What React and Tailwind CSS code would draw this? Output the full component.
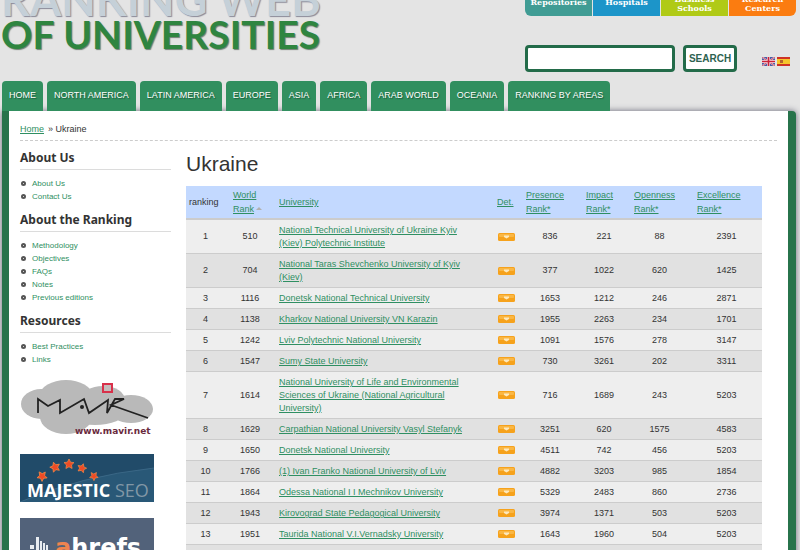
import React from 'react';

const navItems = [
    'HOME', 'NORTH AMERICA', 'LATIN AMERICA', 'EUROPE', 'ASIA',
    'AFRICA', 'ARAB WORLD', 'OCEANIA', 'RANKING BY AREAS',
];

const siteTabs = [
    { lines: ['Repositories'], style: 'justify-center bg-[#409c94] rounded-bl-md' },
    { lines: ['Hospitals'], style: 'justify-center bg-[#1c95c9]' },
    { lines: ['Business', 'Schools'], style: 'justify-end bg-[#b0ca16]' },
    { lines: ['Research', 'Centers'], style: 'justify-end bg-[#fb7c10] rounded-br-md' },
];

const menus = [
    { title: 'About Us', links: ['About Us', 'Contact Us'] },
    { title: 'About the Ranking', links: ['Methodology', 'Objectives', 'FAQs', 'Notes', 'Previous editions'] },
    { title: 'Resources', links: ['Best Practices', 'Links'] },
];

const rankHeaders = ['Presence', 'Impact', 'Openness', 'Excellence'];

const universities = [
    [510, 'National Technical University of Ukraine Kyiv (Kiev) Polytechnic Institute', 836, 221, 88, 2391],
    [704, 'National Taras Shevchenko University of Kyiv (Kiev)', 377, 1022, 620, 1425],
    [1116, 'Donetsk National Technical University', 1653, 1212, 246, 2871],
    [1138, 'Kharkov National University VN Karazin', 1955, 2263, 234, 1701],
    [1242, 'Lviv Polytechnic National University', 1091, 1576, 278, 3147],
    [1547, 'Sumy State University', 730, 3261, 202, 3311],
    [1614, 'National University of Life and Environmental Sciences of Ukraine (National Agricultural University)', 716, 1689, 243, 5203],
    [1629, 'Carpathian National University Vasyl Stefanyk', 3251, 620, 1575, 4583],
    [1650, 'Donetsk National University', 4511, 742, 456, 5203],
    [1766, '(1) Ivan Franko National University of Lviv', 4882, 3203, 985, 1854],
    [1864, 'Odessa National I I Mechnikov University', 5329, 2483, 860, 2736],
    [1943, 'Kirovograd State Pedagogical University', 3974, 1371, 503, 5203],
    [1951, 'Taurida National V.I.Vernadsky University', 1643, 1960, 504, 5203],
];

const Header = () => (
    <header className="flex justify-between pl-px pr-1 pb-[9px]">
        <h1 className="font-['Lato',sans-serif] font-bold whitespace-nowrap -mt-[18px]">
            <span className="block text-[45px] leading-[34px] text-[#c5d0d8] [text-shadow:1px_1px_1px_#8a8a98]">RANKING WEB</span>
            <span className="block text-[39px] leading-[36px] text-[#2f8540] [text-shadow:1px_1px_1px_#6f7f73]">OF UNIVERSITIES</span>
        </h1>
        <div className="w-[271px]">
            <div className="flex gap-px -mt-2 h-6">
                {siteTabs.map((tab) => (
                    <a key={tab.lines[0]} href="#" className={`flex-1 flex flex-col pb-[3px] text-center text-white font-['DejaVu_Serif',serif] font-bold text-[8px] leading-[9px] ${tab.style}`}>
                        {tab.lines.map((line) => <span key={line}>{line}</span>)}
                    </a>
                ))}
            </div>
            <form className="flex items-center gap-2 mt-[29px]" onSubmit={(e) => e.preventDefault()}>
                <input type="text" aria-label="Search" className="w-[150px] h-[27px] bg-white border-[3px] border-[#236b49] rounded px-1 text-xs" />
                <button type="submit" className="w-[54px] h-[27px] bg-white border-[3px] border-[#236b49] rounded text-[10px] font-bold text-[#2d6250]">SEARCH</button>
                <div className="flex gap-[2px] ml-[17px] mt-[6px]">
                    <a href="#" aria-label="English"><FlagUk /></a>
                    <a href="#" aria-label="Español"><FlagSpain /></a>
                </div>
            </form>
        </div>
    </header>
);

const FlagUk = () => (
    <svg width="13" height="9" viewBox="0 0 13 9" className="block">
        <rect width="13" height="9" fill="#4c5aa4" />
        <path d="M0 0L13 9M13 0L0 9" stroke="#e8dce8" strokeWidth="1.6" />
        <path d="M0 0L13 9M13 0L0 9" stroke="#d0354a" strokeWidth="0.8" />
        <path d="M6.5 0V9M0 4.5H13" stroke="#f4e4ea" strokeWidth="2.8" />
        <path d="M6.5 0V9M0 4.5H13" stroke="#cc2238" strokeWidth="1.6" />
    </svg>
);

const FlagSpain = () => (
    <svg width="13" height="9" viewBox="0 0 13 9" className="block">
        <rect width="13" height="9" fill="#cf3326" />
        <rect y="2" width="13" height="5" fill="#f6c52c" />
        <rect x="3" y="3" width="3" height="3" fill="#b5622c" />
    </svg>
);

const DetailIcon = () => (
    <svg width="17" height="8" viewBox="0 0 17 8" className="block mx-auto">
        <rect width="17" height="8" rx="1.5" fill="#f6a21c" />
        <rect x="1" y="1" width="15" height="3" rx="1" fill="#fab744" />
        <path d="M6 2.5H11V4L8.5 5.5L6 4Z" fill="#fde9bd" />
    </svg>
);

const MavirLogo = () => (
    <svg viewBox="0 0 134 60" className="block w-[134px]">
        <g fill="#b9b9b9">
            <ellipse cx="21" cy="26" rx="20" ry="15" />
            <ellipse cx="46" cy="17" rx="26" ry="15" />
            <ellipse cx="83" cy="22" rx="22" ry="14" />
            <ellipse cx="111" cy="31" rx="22" ry="14" />
            <ellipse cx="46" cy="39" rx="26" ry="17" />
            <ellipse cx="75" cy="34" rx="30" ry="13" />
        </g>
        <path d="M18 35V21L28 28L40 22V35L64 21L69 35L88 22L87 35L95 21H104L91 27L128 40" fill="none" stroke="#222" strokeWidth="1.8" />
        <circle cx="62" cy="29" r="2" fill="#222" />
        <rect x="83" y="6" width="9" height="8" fill="#c4bcbc" stroke="#d8304a" strokeWidth="2" />
        <text x="55" y="56" fontFamily="DejaVu Sans, sans-serif" fontWeight="bold" fontSize="9" fill="#6a2b3e">www.mavir.net</text>
    </svg>
);

const star = 'M0 -5L1.6 -1.8L5 -1.4L2.5 1L3.1 4.5L0 2.8L-3.1 4.5L-2.5 1L-5 -1.4L-1.6 -1.8Z';

const MajesticLogo = () => (
    <svg viewBox="0 0 134 48" className="block w-[134px]">
        <rect width="134" height="48" fill="#214b69" />
        <path d="M0 48Q60 22 134 14V48Z" fill="#295877" />
        <path d="M0 48Q60 22 134 14" fill="none" stroke="#43708e" strokeWidth="0.7" />
        <g fill="#ee4b26" stroke="#f78b45" strokeWidth="0.7">
            <path d={star} transform="translate(22 22) rotate(-35)" />
            <path d={star} transform="translate(35 13) rotate(-18)" />
            <path d={star} transform="translate(49 10)" />
            <path d={star} transform="translate(62 14) rotate(18) scale(0.9)" />
            <path d={star} transform="translate(74 22) rotate(35) scale(0.85)" />
        </g>
        <text x="7" y="43" fontFamily="Open Sans, sans-serif" fontWeight="bold" fontSize="18" fill="#fff">MAJESTIC</text>
        <text x="95" y="43" fontFamily="Open Sans, sans-serif" fontSize="18" fill="#8197a6">SEO</text>
    </svg>
);

const AhrefsLogo = () => (
    <svg viewBox="0 0 134 48" className="block w-[134px]">
        <rect width="134" height="48" fill="#52627a" />
        <path d="M10 27H14V31H10ZM16 19H19V34H16ZM20 23H22V34H20ZM23 25H25V34H23ZM26 27H28V34H26Z" fill="#e8ecf1" />
        <text x="35" y="38" fontFamily="DejaVu Sans, sans-serif" fontWeight="bold" fontSize="24" fill="#fff">
            <tspan fill="#ef8450">a</tspan>hrefs
        </text>
    </svg>
);

const Sidebar = () => (
    <aside className="w-[151px] shrink-0">
        {menus.map((menu) => (
            <section key={menu.title} className="mb-2">
                <h2 className="font-['Noto_Sans',sans-serif] font-bold text-xs leading-[18px] pb-0.5 border-b border-[#dcdcdc] text-[#333]">{menu.title}</h2>
                <ul className="pt-[7px]">
                    {menu.links.map((link) => (
                        <li key={link} className="flex items-center gap-[6px] pl-px text-[8px] leading-[13px]">
                            <span className="size-[5px] rounded-full border-2 border-[#555]" />
                            <a href="#" className="text-[#2f8f62]">{link}</a>
                        </li>
                    ))}
                </ul>
            </section>
        ))}
        <div className="flex flex-col gap-4 pt-1">
            <a href="#" aria-label="Mavir"><MavirLogo /></a>
            <a href="#" aria-label="Majestic SEO"><MajesticLogo /></a>
            <a href="#" aria-label="ahrefs"><AhrefsLogo /></a>
        </div>
    </aside>
);

const RankingTable = () => (
    <table className="w-full table-fixed text-[9px] leading-[13px] text-center text-[#333]">
        <colgroup>
            <col className="w-[39px]" />
            <col className="w-[50px]" />
            <col />
            <col className="w-[28px]" />
            <col className="w-[60px]" />
            <col className="w-[48px]" />
            <col className="w-[63px]" />
            <col className="w-[71px]" />
        </colgroup>
        <thead>
            <tr className="bg-[#c3d9ff] border-b-2 border-[#ccc] leading-[14px] text-left">
                <th className="font-normal pl-[3px]">ranking</th>
                <th className="font-normal pl-2 py-[2px]">
                    <a href="#" className="text-[#2f8f62] underline">World Rank</a>
                    <span className="inline-block ml-[2px] mb-[2px] border-x-[3px] border-b-[3px] border-x-transparent border-b-[#b0b0b0]" />
                </th>
                <th className="font-normal pl-1"><a href="#" className="text-[#2f8f62] underline">University</a></th>
                <th className="font-normal pl-[5px]"><a href="#" className="text-[#2f8f62] underline">Det.</a></th>
                {rankHeaders.map((name) => (
                    <th key={name} className="font-normal pl-[6px]">
                        <a href="#" className="text-[#2f8f62] underline">{name}<br />Rank*</a>
                    </th>
                ))}
            </tr>
        </thead>
        <tbody>
            {universities.map(([world, name, ...ranks], i) => (
                <tr key={name} className="odd:bg-[#eee] even:bg-[#e1e1e1] border-b border-[#ccc]">
                    <td>{i + 1}</td>
                    <td>{world}</td>
                    <td className="text-left pl-1 pr-6 pt-1 pb-[3px]"><a href="#" className="text-[#2f8f62] underline">{name}</a></td>
                    <td><a href="#" aria-label={`Details of ${name}`}><DetailIcon /></a></td>
                    {ranks.map((rank, j) => <td key={j}>{rank}</td>)}
                </tr>
            ))}
            <tr className="bg-[#e1e1e1] h-5"><td colSpan={8} /></tr>
        </tbody>
    </table>
);

const App = () => {
    return (
        <div className="min-h-screen overflow-hidden bg-[#e4e4e4] font-['Liberation_Sans',Arial,sans-serif] text-[#333]">
            <Header />
            <nav className="flex gap-1 pl-[2px]">
                {navItems.map((item) => (
                    <a key={item} href="#" className="px-[7px] h-[30px] leading-[29px] rounded-t bg-[#318f5f] text-white text-[9px] whitespace-nowrap [text-shadow:1px_1px_1px_#1d5c3b]">{item}</a>
                ))}
            </nav>
            <div className="ml-[2px] mr-1 pl-[11px] pr-[11px] bg-white border-l-[7px] border-r-8 border-[#27734b] rounded-tr shadow-[0_0_6px_#667]">
                <div className="pt-3 pb-1 text-[9px] leading-[13px] border-b border-dashed border-[#ccc]">
                    <a href="#" className="text-[#2f8f62] underline">Home</a>
                    <span className="ml-1">» Ukraine</span>
                </div>
                <div className="flex gap-[15px] pt-2">
                    <Sidebar />
                    <main className="flex-1 pr-[15px]">
                        <h2 className="text-[21px] leading-[29px] mb-2">Ukraine</h2>
                        <RankingTable />
                    </main>
                </div>
            </div>
        </div>
    );
};

export default App;
